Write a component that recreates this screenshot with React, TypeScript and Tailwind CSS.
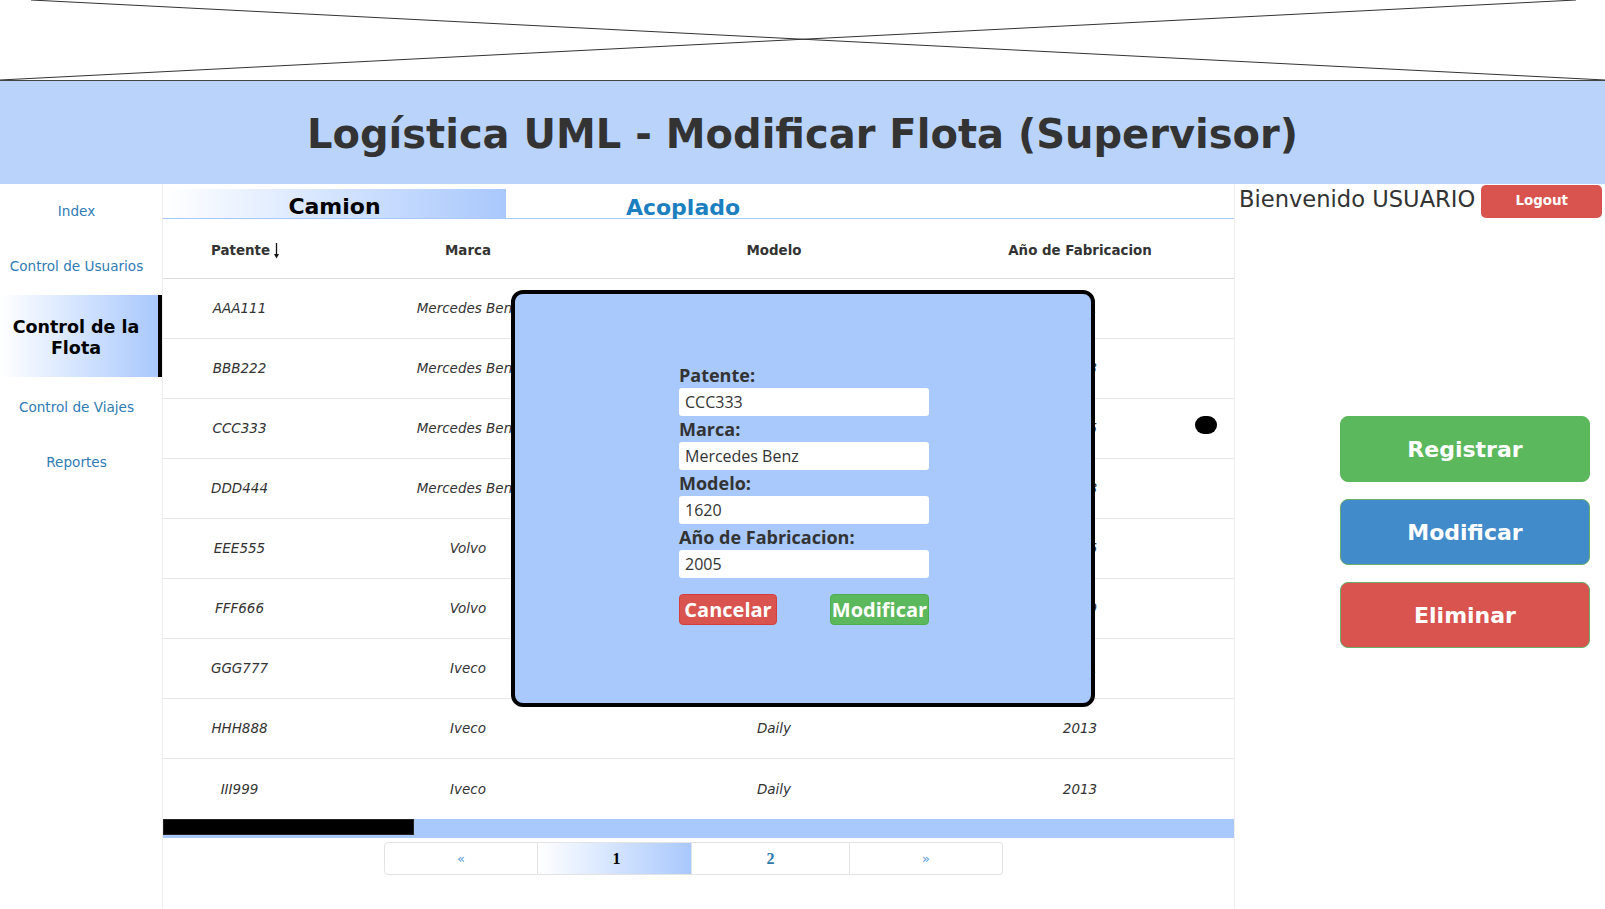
import React from "react";

const rows: [string, string, string, string][] = [
  ["AAA111", "Mercedes Benz", "1114", "2001"],
  ["BBB222", "Mercedes Benz", "1620", "2003"],
  ["CCC333", "Mercedes Benz", "1620", "2005"],
  ["DDD444", "Mercedes Benz", "1634", "2008"],
  ["EEE555", "Volvo", "FH12", "2006"],
  ["FFF666", "Volvo", "FH16", "2009"],
  ["GGG777", "Iveco", "Stralis", "2011"],
  ["HHH888", "Iveco", "Daily", "2013"],
  ["III999", "Iveco", "Daily", "2013"],
];

function SortArrow() {
  return (
    <svg width="7" height="16" viewBox="0 0 7 16" className="ml-[3px] inline-block">
      <line x1="3.5" y1="0" x2="3.5" y2="13" stroke="#111" strokeWidth="1.3" />
      <path d="M1 11 L3.5 15.5 L6 11 Z" fill="#111" />
    </svg>
  );
}

function Field({ label, value }: { label: string; value: string }) {
  return (
    <div className="flex flex-col">
      <div className="h-[26px] leading-[26px] font-['Open_Sans',sans-serif] font-bold text-[18px] text-[#333]">
        {label}
      </div>
      <div className="h-[28px] bg-white rounded-[3px] pl-[6px] flex items-center font-['Open_Sans',sans-serif] text-[16px] text-[#333]">
        {value}
      </div>
    </div>
  );
}

export default function App() {
  return (
    <div className="relative w-[1605px] h-[909px] overflow-hidden bg-white font-['DejaVu_Sans',sans-serif] text-[#333]">
      {/* image placeholder */}
      <div className="relative h-[81px] border-b border-[#444]">
        <svg
          className="absolute left-0 top-0 w-full h-[80px]"
          viewBox="0 0 1605 80"
          preserveAspectRatio="none"
        >
          <line x1="31" y1="0" x2="1605" y2="80" stroke="#333" strokeWidth="1" />
          <line x1="1576" y1="0" x2="0" y2="80" stroke="#333" strokeWidth="1" />
        </svg>
      </div>

      {/* title bar */}
      <div className="h-[103px] bg-[#b9d3fb] flex items-center justify-center pt-[3px]">
        <h1 className="text-[40px] leading-none font-bold text-[#333]">
          Logística UML - Modificar Flota (Supervisor)
        </h1>
      </div>

      <div className="flex h-[725px]">
        {/* sidebar */}
        <nav className="w-[162px] flex flex-col text-[13.6px] text-[#2e7bb5]">
          <div className="h-[55px] pr-[9px] flex items-center justify-center">Index</div>
          <div className="h-[55px] pr-[9px] flex items-center justify-center">Control de Usuarios</div>
          <div className="h-[82px] mt-[1px] pt-[4px] pr-[6px] border-r-4 border-black bg-linear-to-r from-white to-[#a9c8fc] flex items-center justify-center text-center font-bold text-[17.5px] leading-[21px] text-black">
            Control de la
            <br />
            Flota
          </div>
          <div className="h-[58px] pt-[3px] pr-[9px] flex items-center justify-center">Control de Viajes</div>
          <div className="h-[55px] pr-[9px] flex items-center justify-center">Reportes</div>
        </nav>

        {/* main */}
        <main className="w-[1073px] border-l border-r border-[#eee] pt-[5px] flex flex-col">
          <div className="h-[30px] flex border-b border-[#a9c8fc]">
            <div className="w-[343px] h-[29px] pt-[6px] bg-linear-to-r from-white to-[#a9c8fc] flex items-center justify-center font-bold text-[22px] text-black">
              Camion
            </div>
            <div className="w-[354px] pt-[7px] flex items-center justify-center font-bold text-[22px] text-[#1b7fc0]">
              Acoplado
            </div>
          </div>

          <div className="grid grid-cols-[165px_280px_332px_280px_1fr] h-[60px] pt-[5px] border-b border-[#ddd] items-center font-bold text-[13.4px] text-[#333]">
            <div className="flex items-center justify-center">
              Patente
              <SortArrow />
            </div>
            <div className="text-center">Marca</div>
            <div className="text-center">Modelo</div>
            <div className="text-center">Año de Fabricacion</div>
            <div />
          </div>

          {rows.map((r, i) => (
            <div
              key={r[0]}
              className={`grid grid-cols-[165px_280px_332px_280px_1fr] h-[60px] items-center italic text-[13.5px] text-[#333] ${
                i < rows.length - 1 ? "border-b border-[#e6e6e6]" : ""
              }`}
            >
              <div className="text-center pr-[12px]">{r[0]}</div>
              <div className="text-center">{r[1]}</div>
              <div className="text-center">{r[2]}</div>
              <div className="text-center">{r[3]}</div>
              <div />
            </div>
          ))}

          {/* scrollbar */}
          <div className="h-[19px] bg-[#a9c8fc] flex items-start">
            <div className="w-[251px] h-[16px] bg-black border border-[#222]" />
          </div>

          {/* pagination */}
          <div className="mt-[4px] pl-[221px] flex">
            <div className="w-[154px] h-[33px] border border-[#e3e3e3] rounded-l-[4px] flex items-center justify-center text-[13px] text-[#5b9bd5]">
              «
            </div>
            <div className="w-[154px] h-[33px] border-y border-r border-[#e3e3e3] bg-linear-to-r from-white to-[#a9c8fc] flex items-center justify-center pl-[4px] font-['Liberation_Serif',serif] font-bold text-[16px] text-black">
              1
            </div>
            <div className="w-[158px] h-[33px] border-y border-r border-[#e3e3e3] flex items-center justify-center font-['Liberation_Serif',serif] font-bold text-[16px] text-[#2a7ab0]">
              2
            </div>
            <div className="w-[153px] h-[33px] border-y border-r border-[#e3e3e3] rounded-r-[4px] flex items-center justify-center text-[13px] text-[#5b9bd5]">
              »
            </div>
          </div>
        </main>

        {/* right panel */}
        <aside className="flex-1 flex flex-col">
          <div className="pt-[1px] pl-[4px] flex items-start">
            <span className="text-[22.6px] leading-[28px] text-[#333] whitespace-nowrap">Bienvenido USUARIO</span>
            <button className="ml-[6px] w-[121px] h-[33px] rounded-[5px] bg-[#d9534f] text-white font-bold text-[13.4px]">
              Logout
            </button>
          </div>
          <div className="mt-[198px] ml-[105px] w-[250px] flex flex-col gap-[17px]">
            <button className="h-[66px] rounded-[8px] bg-[#5cb85c] border border-[#5cb85c] text-white font-bold text-[22px]">
              Registrar
            </button>
            <button className="h-[66px] rounded-[8px] bg-[#428bca] border border-[#6aae6a] text-white font-bold text-[22px]">
              Modificar
            </button>
            <button className="h-[66px] rounded-[8px] bg-[#d9534f] border border-[#6aae6a] text-white font-bold text-[22px]">
              Eliminar
            </button>
          </div>
        </aside>
      </div>

      {/* selection dot */}
      <div className="absolute left-[1195px] top-[416px] w-[22px] h-[18px] rounded-full bg-black" />

      {/* modal */}
      <div className="absolute left-[511px] top-[290px] w-[584px] h-[417px] border-4 border-black rounded-[12px] bg-[#a9c9fc]">
        <div className="w-[250px] pt-[68px] ml-[164px]">
          <Field label="Patente:" value="CCC333" />
          <Field label="Marca:" value="Mercedes Benz" />
          <Field label="Modelo:" value="1620" />
          <Field label="Año de Fabricacion:" value="2005" />
          <div className="mt-[16px] flex justify-between">
            <button className="w-[98px] h-[31px] rounded-[4px] bg-[#d9534f] border border-[#d43f3a] text-white font-['Open_Sans',sans-serif] font-bold text-[20px] leading-none">
              Cancelar
            </button>
            <button className="w-[99px] h-[31px] rounded-[4px] bg-[#5cb85c] border border-[#4cae4c] text-white font-['Open_Sans',sans-serif] font-bold text-[20px] leading-none">
              Modificar
            </button>
          </div>
        </div>
      </div>
    </div>
  );
}
